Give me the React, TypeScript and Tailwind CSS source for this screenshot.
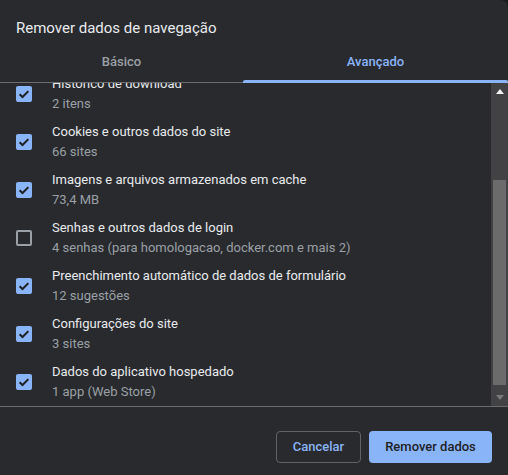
import React from "react";

const items = [
  { title: "Histórico de download", sub: "2 itens", checked: true },
  { title: "Cookies e outros dados do site", sub: "66 sites", checked: true },
  { title: "Imagens e arquivos armazenados em cache", sub: "73,4 MB", checked: true },
  { title: "Senhas e outros dados de login", sub: "4 senhas (para homologacao, docker.com e mais 2)", checked: false },
  { title: "Preenchimento automático de dados de formulário", sub: "12 sugestões", checked: true },
  { title: "Configurações do site", sub: "3 sites", checked: true },
  { title: "Dados do aplicativo hospedado", sub: "1 app (Web Store)", checked: true },
];

function Checkbox({ checked }: { checked: boolean }) {
  if (!checked) {
    return <div className="w-4 h-4 shrink-0 rounded-[2px] border-2 border-[#9aa0a6]" />;
  }
  return (
    <div className="w-4 h-4 shrink-0 rounded-[2px] bg-[#8ab4f8] flex items-center justify-center">
      <svg width="16" height="16" viewBox="0 0 16 16">
        <path d="M3.6 8.2 L6.5 11 L12.4 5.1" fill="none" stroke="#202124" strokeWidth="2" />
      </svg>
    </div>
  );
}

export default function App() {
  return (
    <div className="w-[508px] h-[475px] bg-[#1c1c1e]" style={{ fontFamily: "Roboto, 'Liberation Sans', sans-serif" }}>
      <div className="w-full h-full bg-[#292a2d] rounded-tr-lg flex flex-col overflow-hidden">
        <div className="px-4 pt-[18px] pb-[3px]">
          <h1 className="text-[15px] leading-5 text-[#e8eaed]">Remover dados de navegação</h1>
        </div>

        <div className="grid grid-cols-[243px_1fr] h-[42px] border-b border-[#6b6d70]">
          <div className="flex items-center justify-center text-[13px] font-medium text-[#9aa0a6]">Básico</div>
          <div className="relative flex items-center justify-center text-[13px] font-medium text-[#8ab4f8]">
            Avançado
            <div className="absolute left-0 right-0 -bottom-px h-[3px] rounded-t-[2px] bg-[#8ab4f8]" />
          </div>
        </div>

        <div className="flex h-[324px] border-b border-[#6b6d70]">
          <div className="flex-1 overflow-hidden">
            <div className="-mt-[13px]">
              {items.map((it) => (
                <div key={it.title} className="flex items-center h-12 px-4 gap-5">
                  <Checkbox checked={it.checked} />
                  <div className="text-[13px] leading-5">
                    <div className="text-[#e8eaed]">{it.title}</div>
                    <div className="text-[#9aa0a6]">{it.sub}</div>
                  </div>
                </div>
              ))}
            </div>
          </div>
          <div className="w-[17px] bg-[#424244] flex flex-col">
            <div className="h-[17px] flex items-center justify-center">
              <svg width="8" height="5" viewBox="0 0 8 5"><polygon points="0,5 8,5 4,0" fill="#f1f1f1" /></svg>
            </div>
            <div className="flex-1">
              <div className="mt-[80px] h-[205px] mx-[2px] bg-[#6b6b6b]" />
            </div>
            <div className="h-[17px] flex items-center justify-center">
              <svg width="8" height="5" viewBox="0 0 8 5"><polygon points="0,0 8,0 4,5" fill="#7a7a7a" /></svg>
            </div>
          </div>
        </div>

        <div className="flex justify-end gap-2 pt-6 pr-4">
          <button className="w-[85px] h-8 rounded border border-[#5f6368] text-[13px] font-medium text-[#8ab4f8]">Cancelar</button>
          <button className="w-[123px] h-8 rounded bg-[#8ab4f8] text-[13px] font-medium text-[#202124]">Remover dados</button>
        </div>
      </div>
    </div>
  );
}
